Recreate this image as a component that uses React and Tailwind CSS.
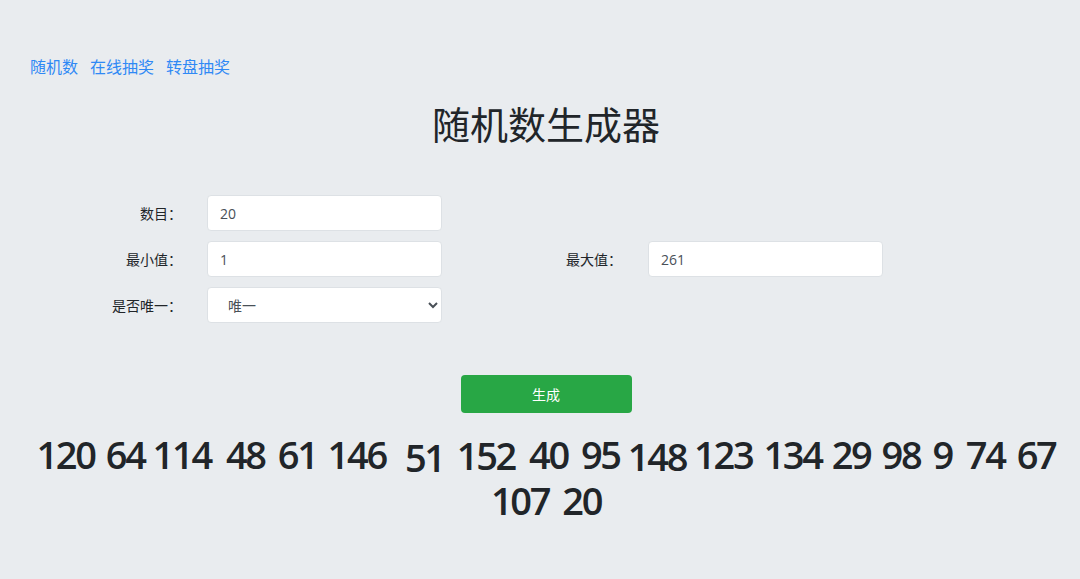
import React, { useState } from 'react';

const nums = [
  { n: 120, gap: 0, dy: 0 },
  { n: 64, gap: 11, dy: 0 },
  { n: 114, gap: 8, dy: 0 },
  { n: 48, gap: 15, dy: 0 },
  { n: 61, gap: 13, dy: 0 },
  { n: 146, gap: 11, dy: 0 },
  { n: 51, gap: 19, dy: 3 },
  { n: 152, gap: 13, dy: 1 },
  { n: 40, gap: 14, dy: 0 },
  { n: 95, gap: 13, dy: 0 },
  { n: 148, gap: 8, dy: 2 },
  { n: 123, gap: 8, dy: 0 },
  { n: 134, gap: 11, dy: 0 },
  { n: 29, gap: 10, dy: 0 },
  { n: 98, gap: 11, dy: 0 },
  { n: 9, gap: 12, dy: 0 },
  { n: 74, gap: 14, dy: 0 },
  { n: 67, gap: 12, dy: 0 },
];
const nums2 = [
  { n: 107, gap: 0, dy: 0 },
  { n: 20, gap: 13, dy: 0 },
];

const font = { fontFamily: '"Open Sans", "Noto Sans CJK SC", sans-serif' };

const Field = ({ label, labelW, gap, children }) => (
  <div className="flex items-center">
    <div className="text-right text-[14px] text-[#212529]" style={{ width: labelW }}>{label}</div>
    <div className="w-[235px]" style={{ marginLeft: gap }}>{children}</div>
  </div>
);

const inputCls =
  'w-full h-[36px] rounded-[4px] border border-[#dde1e5] bg-white px-[12px] text-[14px] text-[#495057] outline-none';

const Num = ({ x }) => (
  <span className="relative inline-block" style={{ marginLeft: x.gap, top: x.dy }}>
    {x.n}
  </span>
);

export default function App() {
  const [count, setCount] = useState('20');
  const [min, setMin] = useState('1');
  const [max, setMax] = useState('261');
  const [unique, setUnique] = useState('1');

  return (
    <div className="min-h-screen bg-[#e9ecef]" style={font}>
      <nav className="flex gap-[12px] pl-[30px] pt-[55px] text-[16px] leading-[24px] text-[#2f89f5]">
        <a href="#">随机数</a>
        <a href="#">在线抽奖</a>
        <a href="#">转盘抽奖</a>
      </nav>

      <h1 className="mt-[21px] pl-[12px] text-center text-[38px] leading-[48px] font-normal text-[#212529]">随机数生成器</h1>

      <div className="mt-[47px] flex flex-col gap-[10px]">
        <Field label="数目：" labelW={182} gap={25}>
          <input className={inputCls} value={count} onChange={(e) => setCount(e.target.value)} />
        </Field>
        <div className="flex">
          <Field label="最小值：" labelW={182} gap={25}>
            <input className={inputCls} value={min} onChange={(e) => setMin(e.target.value)} />
          </Field>
          <Field label="最大值：" labelW={180} gap={26}>
            <input className={inputCls} value={max} onChange={(e) => setMax(e.target.value)} />
          </Field>
        </div>
        <Field label="是否唯一：" labelW={182} gap={25}>
          <select
            className="h-[36px] w-full rounded-[4px] border border-[#dde1e5] bg-white pl-[16px] pr-[8px] text-[14px] text-[#495057] outline-none"
            value={unique}
            onChange={(e) => setUnique(e.target.value)}
          >
            <option value="1">唯一</option>
            <option value="0">不唯一</option>
          </select>
        </Field>
      </div>

      <div className="mt-[52px] flex justify-center pl-[12px]">
        <button className="h-[38px] w-[171px] rounded-[4px] bg-[#28a745] text-[14px] text-white">生成</button>
      </div>

      <div className="mt-[18px] whitespace-nowrap pl-[12px] text-center text-[38px] font-semibold leading-[46px] tracking-[-2.3px] text-[#212529]">
        <div>
          {nums.map((x, i) => (
            <Num key={i} x={x} />
          ))}
        </div>
        <div>
          {nums2.map((x, i) => (
            <Num key={i} x={x} />
          ))}
        </div>
      </div>
    </div>
  );
}
